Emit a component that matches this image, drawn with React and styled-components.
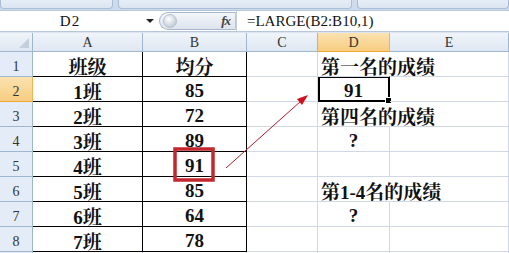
import React from "react";
import styled, { createGlobalStyle, css } from "styled-components";

const GlobalStyle = createGlobalStyle`
  html, body { margin: 0; padding: 0; background: #fff; overflow: hidden; }
  #root { width: 509px; height: 253px; }
`;

const Page = styled.div`
  position: relative;
  width: 509px;
  height: 253px;
  overflow: hidden;
  display: flex;
  flex-direction: column;
  background: #fff;
`;

const RibbonStrip = styled.div`
  height: 10px;
  flex: none;
  display: flex;
  gap: 5px;
  background: #cddbec;
  box-sizing: border-box;
`;

const RibbonGroup = styled.div`
  width: ${(p) => p.$w}px;
  flex: ${(p) => (p.$grow ? 1 : "none")};
  height: 9px;
  box-sizing: border-box;
  background: linear-gradient(#e6edf6, #dbe5f1);
  border: 1px solid #a9bdd6;
  border-top: none;
  border-radius: 0 0 4px 4px;
`;

const FormulaBar = styled.div`
  height: 20px;
  flex: none;
  display: flex;
  align-items: stretch;
  background: #fff;
  border-top: 1px solid #b6c7dc;
  border-bottom: 1px solid #b6c7dc;
  box-sizing: content-box;
`;

const serifMono = css`
  font-family: "Liberation Serif", "DejaVu Serif", serif;
  color: #111;
`;

const NameBox = styled.div`
  width: 140px;
  flex: none;
  display: flex;
  align-items: center;
  justify-content: center;
  ${serifMono};
  font-size: 15px;
  letter-spacing: 1px;
`;

const DropArrow = styled.div`
  width: 19px;
  flex: none;
  display: flex;
  align-items: center;
  justify-content: center;
  &::before {
    content: "";
    border-left: 4px solid transparent;
    border-right: 4px solid transparent;
    border-top: 4px solid #222;
  }
`;

const FxPill = styled.div`
  width: 77px;
  flex: none;
  margin: 1px 0;
  display: flex;
  align-items: center;
  justify-content: space-between;
  box-sizing: border-box;
  padding: 0 5px 0 3px;
  background: linear-gradient(#f3f6fa, #dde4ee);
  border: 1px solid #a8b8cc;
  border-right: 1px solid #b9c6d6;
  border-radius: 9px 0 0 9px;
`;

const Knob = styled.div`
  width: 12px;
  height: 12px;
  border-radius: 50%;
  background: radial-gradient(circle at 40% 35%, #ffffff, #c8d0da 70%, #aab4c0);
  border: 1px solid #b7c1cc;
`;

const Fx = styled.span`
  font-family: "Liberation Serif", serif;
  font-style: italic;
  font-weight: bold;
  font-size: 13px;
  color: #444;
  letter-spacing: -1px;
`;

const FormulaText = styled.div`
  flex: 1;
  display: flex;
  align-items: center;
  padding-left: 10px;
  ${serifMono};
  font-size: 15px;
  border-left: 1px solid #c3cfdd;
`;

const Band = styled.div`
  height: 1px;
  flex: none;
  background: #dbe5f1;
`;

const Sheet = styled.div`
  display: grid;
  grid-template-columns: 33px 110px 104px 71px 72px 1fr;
  grid-template-rows: 19px repeat(9, 25px);
  flex: none;
`;

const headBg = css`
  background: linear-gradient(#f0f4fa, #dfe7f2);
`;
const selBg = css`
  background: linear-gradient(#fbe2b0, #f7cd82);
`;

const Corner = styled.div`
  ${headBg};
  border-right: 1px solid #9eb6ce;
  border-bottom: 1px solid #9eb6ce;
  box-sizing: border-box;
  position: relative;
  &::after {
    content: "";
    position: absolute;
    right: 3px;
    bottom: 3px;
    border-left: 10px solid transparent;
    border-bottom: 10px solid #c3cfdd;
  }
`;

const ColHead = styled.div`
  ${(p) => (p.$sel ? selBg : headBg)};
  box-sizing: border-box;
  border-right: 1px solid ${(p) => (p.$sel ? "#f0b550" : "#9eb6ce")};
  border-bottom: 1px solid ${(p) => (p.$sel ? "#f0a830" : "#9eb6ce")};
  display: flex;
  align-items: center;
  justify-content: center;
  font-family: "Liberation Serif", serif;
  font-size: 14px;
  color: #333;
  padding-top: 1px;
`;

const RowHead = styled.div`
  ${(p) => (p.$sel ? selBg : css`background: #e4ecf7;`)};
  box-sizing: border-box;
  border-right: 1px solid ${(p) => (p.$sel ? "#f0b550" : "#9eb6ce")};
  border-bottom: 1px solid ${(p) => (p.$sel ? "#f0a830" : "#9eb6ce")};
  display: flex;
  align-items: center;
  justify-content: center;
  font-family: "Liberation Serif", serif;
  font-size: 14px;
  color: #333;
  padding-top: 6px;
`;

const Cell = styled.div`
  position: relative;
  box-sizing: border-box;
  border-right: 1px solid ${(p) => (p.$noRight ? "transparent" : p.$black ? "#000" : "#d0d7e5")};
  border-bottom: 1px solid ${(p) => (p.$blackBottom ? "#000" : "#d0d7e5")};
  display: flex;
  align-items: center;
  justify-content: ${(p) => (p.$left ? "flex-start" : "center")};
  padding: 3px 0 0 ${(p) => (p.$left ? "3px" : "0")};
  white-space: nowrap;
  overflow: visible;
  font-family: "Liberation Serif", "Noto Serif CJK SC", "Noto Sans CJK SC", serif;
  font-weight: bold;
  font-size: 19px;
  color: #111;
  z-index: ${(p) => (p.$left ? 1 : 0)};
  ${(p) =>
    p.$selected &&
    css`
      &::after {
        content: "";
        position: absolute;
        left: 0;
        top: -1px;
        right: -1px;
        bottom: -1px;
        border: 2px solid #000;
      }
      &::before {
        content: "";
        position: absolute;
        right: -3px;
        bottom: -3px;
        width: 5px;
        height: 5px;
        background: #000;
        border: 1px solid #fff;
        z-index: 2;
      }
    `}
`;

const Overlay = styled.svg`
  position: absolute;
  left: 0;
  top: 0;
  width: 509px;
  height: 253px;
  pointer-events: none;
`;

const cols = ["A", "B", "C", "D", "E"];
const table = [
  ["班级", "均分"],
  ["1班", "85"],
  ["2班", "72"],
  ["3班", "89"],
  ["4班", "91"],
  ["5班", "85"],
  ["6班", "64"],
  ["7班", "78"],
  ["", ""],
];
const dCol = ["第一名的成绩", "91", "第四名的成绩", "?", "", "第1-4名的成绩", "?", "", ""];

export default function App() {
  return (
    <>
      <GlobalStyle />
      <Page>
        <RibbonStrip>
          <RibbonGroup $w={113} />
          <RibbonGroup $w={234} />
          <RibbonGroup $grow />
        </RibbonStrip>
        <FormulaBar>
          <NameBox>D2</NameBox>
          <DropArrow />
          <FxPill>
            <Knob />
            <Fx>fx</Fx>
          </FxPill>
          <FormulaText>=LARGE(B2:B10,1)</FormulaText>
        </FormulaBar>
        <Band />
        <Sheet>
          <Corner />
          {cols.map((c, i) => (
            <ColHead key={i} $sel={c === "D"}>
              {c}
            </ColHead>
          ))}
          {table.map((row, r) => {
            const d = dCol[r];
            const overflow = d.length > 3;
            const inTable = r < 8;
            return (
              <React.Fragment key={r}>
                <RowHead $sel={r === 1}>{r + 1}</RowHead>
                <Cell $black={inTable} $blackBottom={inTable}>{row[0]}</Cell>
                <Cell $black={inTable} $blackBottom={inTable}>{row[1]}</Cell>
                <Cell />
                <Cell $left={overflow} $noRight={overflow} $selected={r === 1}>
                  {d}
                </Cell>
                <Cell />
              </React.Fragment>
            );
          })}
        </Sheet>
        <Overlay viewBox="0 0 509 253">
          <rect x="175" y="149" width="38" height="31" fill="none" stroke="#c1272d" strokeWidth="3.5" />
          <line x1="226" y1="168" x2="301" y2="101" stroke="#b01c2a" strokeWidth="1" />
          <polygon points="308,95 297,99 302,105" fill="#d0101c" />
        </Overlay>
      </Page>
    </>
  );
}
